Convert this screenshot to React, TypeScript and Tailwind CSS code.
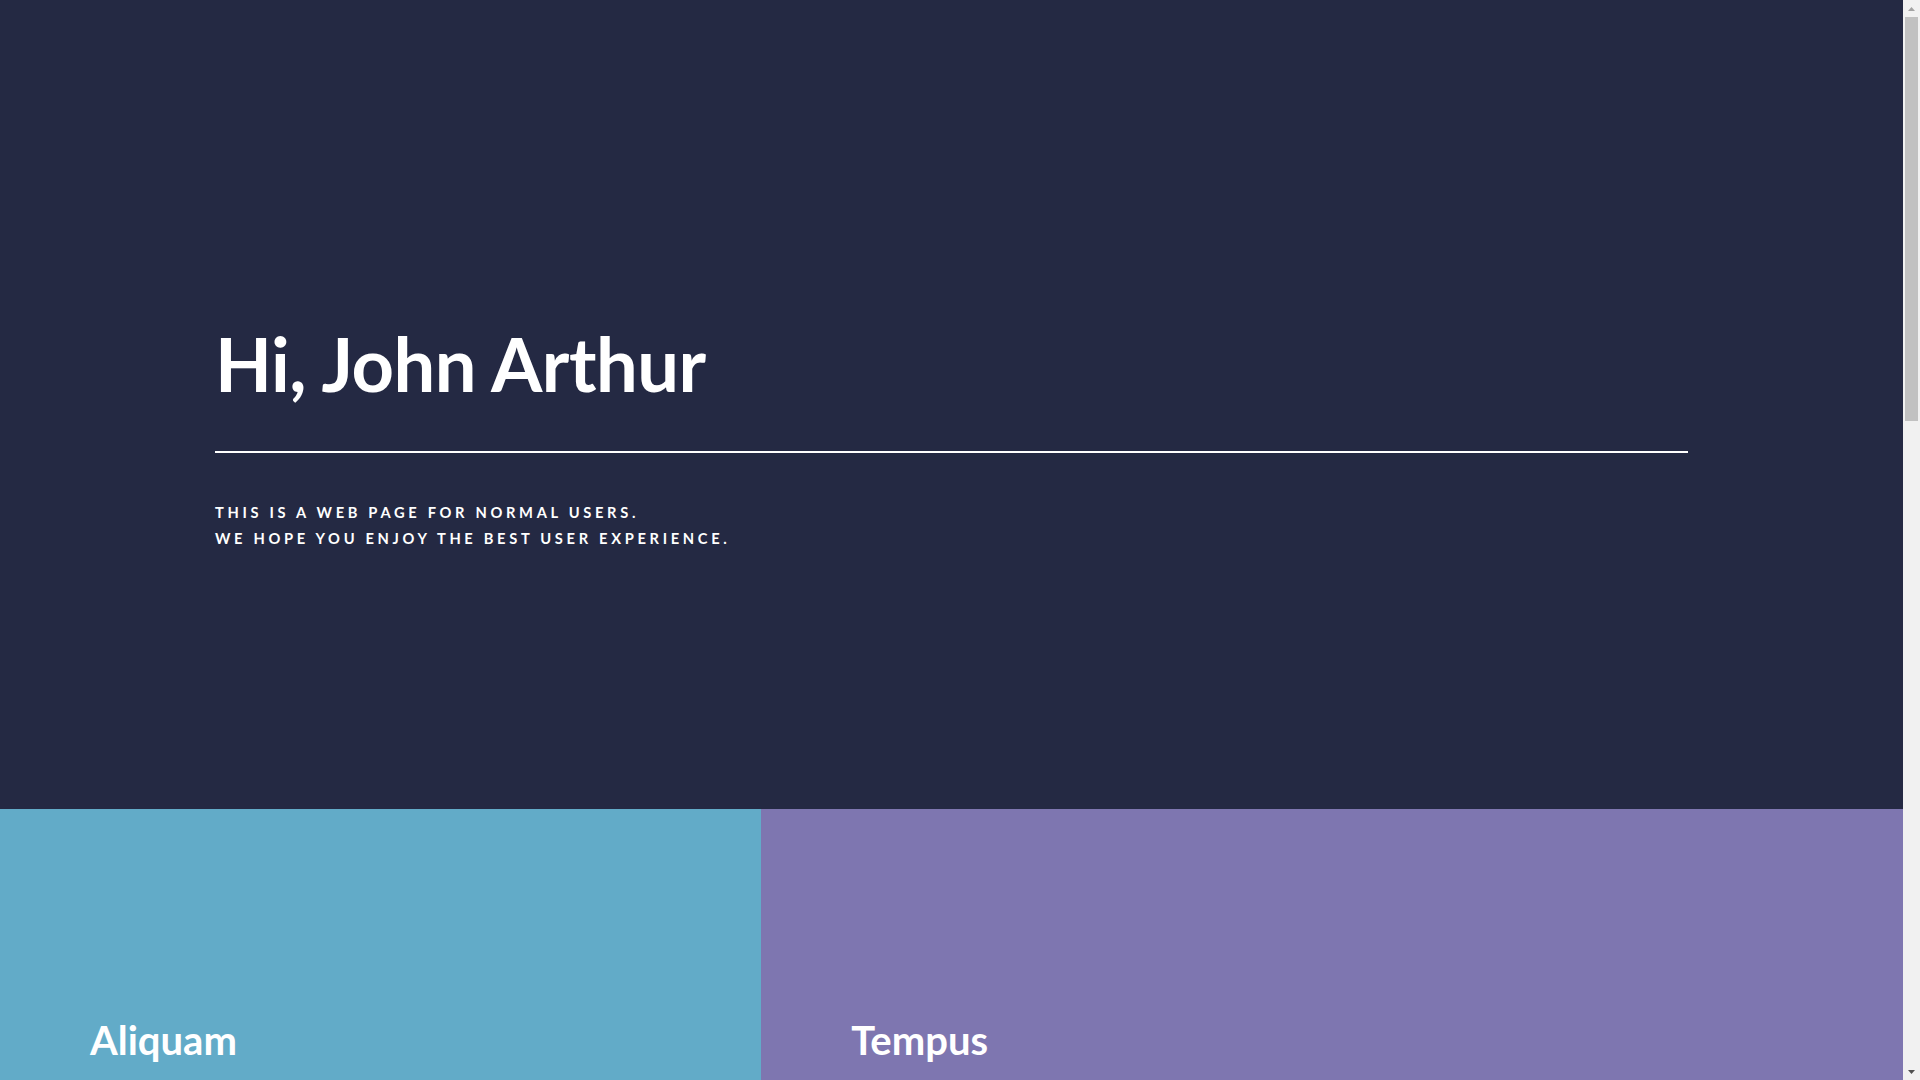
const TILES = [
  { title: "Aliquam", text: "Ipsum dolor sit amet", color: "bg-[#62abc8]", width: "basis-[40%]" },
  { title: "Tempus", text: "feugiat amet tempus", color: "bg-[#7e76b0]", width: "basis-[60%]" },
  { title: "Magna", text: "Lorem etiam nullam", color: "bg-[#9bbfc9]", width: "basis-[60%]" },
  { title: "Ipsum", text: "Nisl sed aliquam", color: "bg-[#c1a077]", width: "basis-[40%]" },
  { title: "Consequat", text: "Ipsum dolor sit amet", color: "bg-[#7d9fb0]", width: "basis-[40%]" },
  { title: "Etiam", text: "Feugiat amet tempus", color: "bg-[#a28fba]", width: "basis-[60%]" },
];

function Tile({ title, text, color, width }: (typeof TILES)[number]) {
  return (
    <article className={`${color} ${width} h-[432px] shrink-0 pl-[90px] pt-[205px]`}>
      <h3 className="text-[40px] font-bold leading-[1.3] text-white">{title}</h3>
      <div className="mt-4 h-[2px] w-[96px] bg-white" />
      <p className="mt-5 text-[15px] font-semibold uppercase tracking-[0.25em] text-white">
        {text}
      </p>
    </article>
  );
}

// static picture of the browser's scrollbar at scroll position 0
function Scrollbar() {
  return (
    <aside className="flex w-[17px] shrink-0 flex-col bg-[#f1f1f1]">
      <div className="flex h-[17px] items-center justify-center">
        <svg width="7" height="4" viewBox="0 0 7 4">
          <path d="M3.5 0L7 4H0z" fill="#a3a3a3" />
        </svg>
      </div>
      <div className="mx-[2px] h-[404px] bg-[#c1c1c1]" />
      <div className="flex-1" />
      <div className="flex h-[17px] items-center justify-center">
        <svg width="7" height="4" viewBox="0 0 7 4">
          <path d="M0 0H7L3.5 4z" fill="#505050" />
        </svg>
      </div>
    </aside>
  );
}

export default function App() {
  return (
    <div className="flex h-screen overflow-hidden bg-[#242943] font-['Source_Sans_Pro','Lato',sans-serif] text-white">
      <main className="min-w-0 flex-1">
        <section className="h-[809px] px-[215px] pt-[323px]">
          <h1 className="text-[74px] font-bold leading-[1.1] tracking-[-0.5px]">Hi, John Arthur</h1>
          <div className="mt-[47px] h-[2px] w-full bg-white" />
          <p className="mt-[46px] text-[14.7px] font-bold uppercase leading-[26px] tracking-[0.25em]">
            This is a web page for normal users.
            <br />
            We hope you enjoy the best user experience.
          </p>
        </section>

        <section className="flex flex-wrap">
          {TILES.map((t) => (
            <Tile key={t.title} {...t} />
          ))}
        </section>

        <section className="bg-[#2a2f4a] px-[215px] py-[90px]">
          <h2 className="text-[34px] font-bold">Contact</h2>
          <div className="mt-4 h-[2px] w-[96px] bg-white" />
          <div className="mt-10 grid grid-cols-3 gap-8">
            <div className="h-12 rounded border-2 border-white/20" />
            <div className="h-12 rounded border-2 border-white/20" />
            <div className="h-12 rounded border-2 border-white/20" />
          </div>
          <div className="mt-8 h-40 rounded border-2 border-white/20" />
        </section>

        <footer className="h-[120px] px-[215px] pt-12 text-sm text-white/50">
          © Untitled. Design: HTML5 UP
        </footer>
      </main>
      <Scrollbar />
    </div>
  );
}
